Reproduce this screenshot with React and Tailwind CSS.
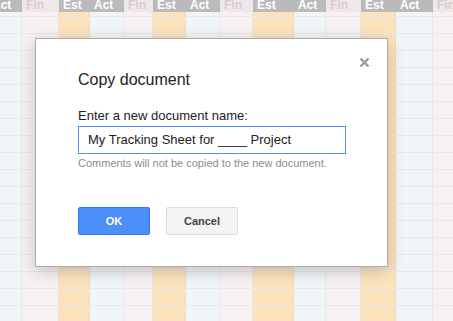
const COLS = [
  { label: 'Act', w: 34 },
  { label: 'Fin', w: 37 },
  { label: 'Est', w: 31 },
  { label: 'Act', w: 34 },
  { label: 'Fin', w: 29 },
  { label: 'Est', w: 33 },
  { label: 'Act', w: 34 },
  { label: 'Fin', w: 33 },
  { label: 'Est', w: 41 },
  { label: 'Act', w: 32 },
  { label: 'Fin', w: 35 },
  { label: 'Est', w: 35 },
  { label: 'Act', w: 37 },
  { label: 'Fin', w: 30 },
]

const BODY = { Est: 'bg-[#fde3bd] border-[#f1d9b4]', Act: 'bg-[#f0f5fa] border-[#e6e8eb]', Fin: 'bg-[#f8f1f3] border-[#ebe5e7]' }
const HEAD = { Est: 'bg-[#bababa] text-white', Act: 'bg-[#bababa] text-white', Fin: 'bg-[#f0e7ea] text-[#d6ccd0]' }

const ROWS = Array.from({ length: 19 })

function Column({ label, w }) {
  return (
    <div className="shrink-0 flex flex-col" style={{ width: w }}>
      <div className={`h-[12px] pl-1 text-[12px] leading-[11px] font-bold ${HEAD[label]}`}>{label}</div>
      <div className={`h-[4px] border-r ${BODY[label]}`} />
      {ROWS.map((_, i) => (
        <div key={i} className={`h-[17px] border-t border-r border-t-[#e8e8ea] ${BODY[label]}`} />
      ))}
    </div>
  )
}

export default function App() {
  return (
    <div className="relative w-[453px] h-[321px] overflow-hidden bg-white font-['Liberation_Sans',Arial,sans-serif]">
      <div className="flex -ml-[12px]">
        {COLS.map((c, i) => <Column key={i} {...c} />)}
      </div>

      <div className="absolute left-[35px] top-[38px] w-[353px] h-[229px] bg-white border border-[#acacac] shadow-[0_4px_16px_rgba(0,0,0,0.2)] pl-[42px] pt-[31px]">
        <button className="absolute right-[17px] top-[17px] w-[12px] h-[12px] flex items-center justify-center">
          <svg width="11" height="11" viewBox="0 0 11 11">
            <path d="M1.5 1.5 L9.5 9.5 M9.5 1.5 L1.5 9.5" stroke="#9a9a9a" strokeWidth="2.4" strokeLinecap="butt" />
          </svg>
        </button>
        <div className="text-[16px] leading-5 text-[#222]">Copy document</div>
        <div className="mt-[18px] text-[13px] leading-4 text-[#222]">Enter a new document name:</div>
        <div className="mt-[2px] w-[268px] h-[28px] border border-[#4d90fe] flex items-center pl-[9px] text-[13px] text-[#222]">
          My Tracking Sheet for ____ Project
        </div>
        <div className="mt-[2px] text-[11px] leading-[14px] text-[#8c8c8c]">Comments will not be copied to the new document.</div>
        <div className="mt-[37px] flex gap-4">
          <button className="w-[72px] h-[28px] rounded-[2px] border border-[#3079ed] bg-[#4d8ff8] text-white text-[11px] font-bold">OK</button>
          <button className="w-[72px] h-[28px] rounded-[2px] border border-[#dcdcdc] bg-[#f3f3f3] text-[#444] text-[11px] font-bold">Cancel</button>
        </div>
      </div>
    </div>
  )
}
